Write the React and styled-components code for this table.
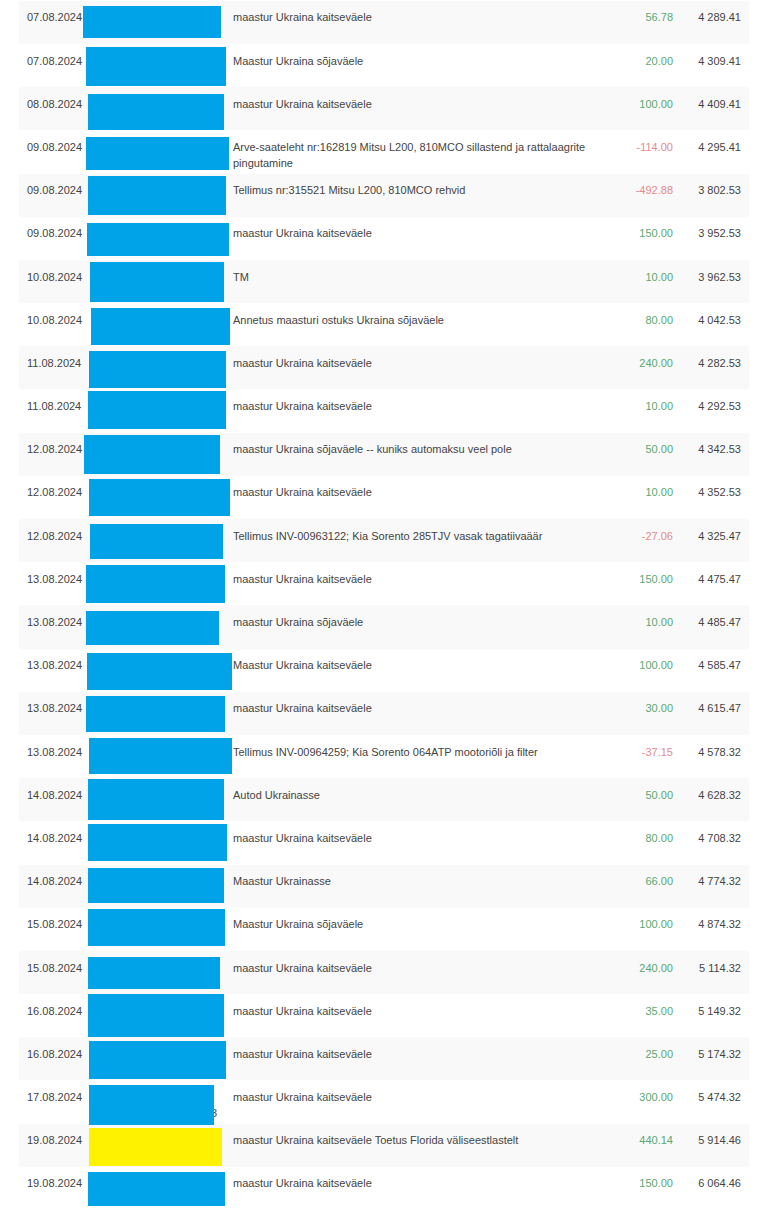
import React from "react";
import styled, { createGlobalStyle } from "styled-components";

const GlobalStyle = createGlobalStyle`
  html, body {
    margin: 0;
    padding: 0;
    background: #ffffff;
  }
  body {
    font-family: "Liberation Sans", Arial, Helvetica, sans-serif;
    -webkit-font-smoothing: antialiased;
  }
`;

const Page = styled.div`
  padding: 0.8px 19px 0 19px;
  width: 768px;
  box-sizing: border-box;
`;

const Table = styled.div`
  display: flex;
  flex-direction: column;
  width: 730px;
`;

const Row = styled.div`
  position: relative;
  display: grid;
  grid-template-columns: 65px 141px 376px 80px 68px;
  height: 43.2px;
  background: ${(p) => (p.$striped ? "#f9f9f9" : "#ffffff")};
  font-size: 11px;
  line-height: 16px;
  color: #444444;
`;

const Cell = styled.div`
  padding: 8.6px 8px 0 8px;
  box-sizing: border-box;
  overflow: hidden;
  white-space: ${(p) => (p.$wrap ? "normal" : "nowrap")};
  text-align: ${(p) => (p.$right ? "right" : "left")};
`;

const DescCell = styled(Cell)`
  padding-right: 0;
`;

const Amount = styled(Cell)`
  color: ${(p) => (p.$negative ? "#e58a8a" : "#5aa872")};
`;

const NameText = styled.div`
  color: #444444;
  text-align: right;
  padding-right: 8px;
  margin-right: -8px;
`;

const Redaction = styled.div`
  position: absolute;
  z-index: 2;
  left: ${(p) => p.$x}px;
  top: ${(p) => p.$y}px;
  width: ${(p) => p.$w}px;
  height: ${(p) => p.$h}px;
  background: ${(p) => (p.$yellow ? "#fff200" : "#00a2e8")};
`;

const rows = [
  ["07.08.2024", "maastur Ukraina kaitseväele", "56.78", "4 289.41", [64, 5.2, 138, 31.7]],
  ["07.08.2024", "Maastur Ukraina sõjaväele", "20.00", "4 309.41", [67, 3, 140, 39]],
  ["08.08.2024", "maastur Ukraina kaitseväele", "100.00", "4 409.41", [69, 6.8, 136, 36]],
  ["09.08.2024", "Arve-saateleht nr:162819 Mitsu L200, 810MCO sillastend ja rattalaagrite pingutamine", "-114.00", "4 295.41", [67, 6.6, 143, 33]],
  ["09.08.2024", "Tellimus nr:315521 Mitsu L200, 810MCO rehvid", "-492.88", "3 802.53", [69, 2.4, 138, 39]],
  ["09.08.2024", "maastur Ukraina kaitseväele", "150.00", "3 952.53", [68, 6.2, 142, 33]],
  ["10.08.2024", "TM", "10.00", "3 962.53", [71, 2, 134, 40]],
  ["10.08.2024", "Annetus maasturi ostuks Ukraina sõjaväele", "80.00", "4 042.53", [72, 4.8, 139, 37]],
  ["11.08.2024", "maastur Ukraina kaitseväele", "240.00", "4 282.53", [70, 4.6, 137, 37]],
  ["11.08.2024", "maastur Ukraina kaitseväele", "10.00", "4 292.53", [69, 1.4, 138, 38]],
  ["12.08.2024", "maastur Ukraina sõjaväele -- kuniks automaksu veel pole", "50.00", "4 342.53", [65, 2.2, 136, 39]],
  ["12.08.2024", "maastur Ukraina kaitseväele", "10.00", "4 352.53", [70, 3, 141, 37]],
  ["12.08.2024", "Tellimus INV-00963122; Kia Sorento 285TJV vasak tagatiivaäär", "-27.06", "4 325.47", [71, 4.8, 133, 35]],
  ["13.08.2024", "maastur Ukraina kaitseväele", "150.00", "4 475.47", [67, 2.6, 139, 38]],
  ["13.08.2024", "maastur Ukraina sõjaväele", "10.00", "4 485.47", [67, 5.4, 133, 34]],
  ["13.08.2024", "Maastur Ukraina kaitseväele", "100.00", "4 585.47", [68, 4.2, 145, 37]],
  ["13.08.2024", "maastur Ukraina kaitseväele", "30.00", "4 615.47", [67, 4, 139, 36]],
  ["13.08.2024", "Tellimus INV-00964259; Kia Sorento 064ATP mootoriõli ja filter", "-37.15", "4 578.32", [70, 2.8, 143, 36]],
  ["14.08.2024", "Autod Ukrainasse", "50.00", "4 628.32", [69, 0.6, 136, 41]],
  ["14.08.2024", "maastur Ukraina kaitseväele", "80.00", "4 708.32", [69, 2.4, 139, 37]],
  ["14.08.2024", "Maastur Ukrainasse", "66.00", "4 774.32", [69, 3.2, 136, 35]],
  ["15.08.2024", "Maastur Ukraina sõjaväele", "100.00", "4 874.32", [69, 1, 137, 37]],
  ["15.08.2024", "maastur Ukraina kaitseväele", "240.00", "5 114.32", [69, 5.8, 132, 32]],
  ["16.08.2024", "maastur Ukraina kaitseväele", "35.00", "5 149.32", [69, -0.4, 136, 43]],
  ["16.08.2024", "maastur Ukraina kaitseväele", "25.00", "5 174.32", [70, 3.4, 137, 38]],
  ["17.08.2024", "maastur Ukraina kaitseväele", "300.00", "5 474.32", [70, 4.2, 125, 40], ["\u00a0", "EE000000000000000003"]],
  ["19.08.2024", "maastur Ukraina kaitseväele Toetus Florida väliseestlastelt", "440.14", "5 914.46", [70, 4, 133, 38], null, true],
  ["19.08.2024", "maastur Ukraina kaitseväele", "150.00", "6 064.46", [69, 4.8, 137, 34]],
];

export default function App() {
  return (
    <>
      <GlobalStyle />
      <Page>
        <Table>
          {rows.map(([date, desc, amount, balance, box, name, yellow], i) => (
            <Row key={i} $striped={i % 2 === 0}>
              <Cell>{date}</Cell>
              <Cell>
                {name && (
                  <>
                    <NameText>{name[0]}</NameText>
                    <NameText>{name[1]}</NameText>
                  </>
                )}
              </Cell>
              <DescCell $wrap>{desc}</DescCell>
              <Amount $right $negative={amount.startsWith("-")}>
                {amount}
              </Amount>
              <Cell $right>{balance}</Cell>
              <Redaction
                $x={box[0]}
                $y={box[1]}
                $w={box[2]}
                $h={box[3]}
                $yellow={!!yellow}
              />
            </Row>
          ))}
        </Table>
      </Page>
    </>
  );
}
